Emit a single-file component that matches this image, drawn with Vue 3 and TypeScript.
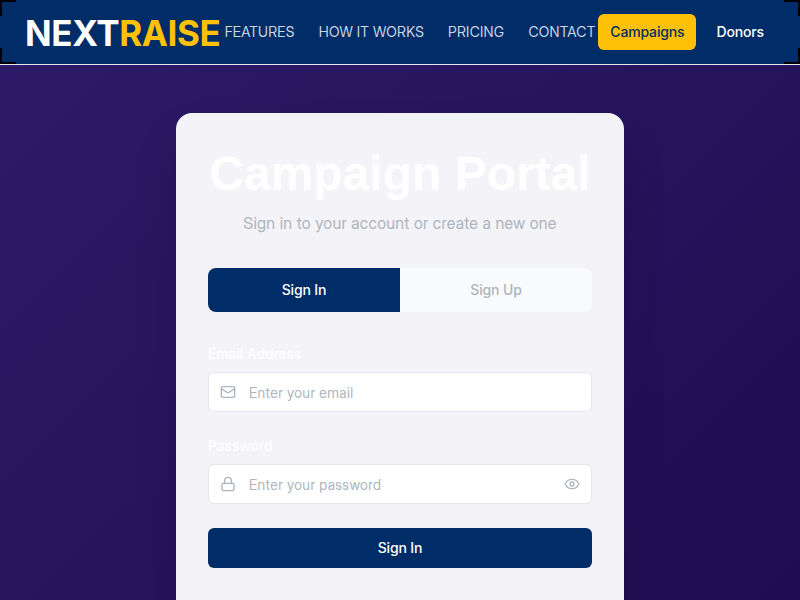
<script setup lang="ts">
import { ref } from 'vue'

const links: string[] = ['FEATURES', 'HOW IT WORKS', 'PRICING', 'CONTACT']
const mode = ref<'in' | 'up'>('in')
const email = ref('')
const password = ref('')
const shown = ref(false)
</script>

<template>
  <div class="page">
    <header class="header">
      <i class="corner tl"></i><i class="corner tr"></i><i class="corner bl"></i><i class="corner br"></i>
      <div class="logo">NEXT<span>RAISE</span></div>
      <nav class="nav">
        <a v-for="link in links" :key="link">{{ link }}</a>
      </nav>
      <div class="switcher">
        <button class="pill active">Campaigns</button>
        <button class="pill">Donors</button>
      </div>
    </header>
    <main class="main">
      <section class="card">
        <h1>Campaign Portal</h1>
        <p class="subtitle">Sign in to your account or create a new one</p>
        <div class="tabs">
          <button :class="{ selected: mode === 'in' }" @click="mode = 'in'">Sign In</button>
          <button :class="{ selected: mode === 'up' }" @click="mode = 'up'">Sign Up</button>
        </div>
        <form class="form" @submit.prevent>
          <div class="field">
            <label for="email">Email Address</label>
            <div class="control">
              <svg viewBox="0 0 24 24"><rect x="2" y="4" width="20" height="16" rx="2" /><path d="m22 7-8.97 5.7a1.94 1.94 0 0 1-2.06 0L2 7" /></svg>
              <input id="email" v-model="email" type="email" placeholder="Enter your email" />
            </div>
          </div>
          <div class="field">
            <label for="password">Password</label>
            <div class="control">
              <svg viewBox="0 0 24 24"><rect x="3" y="11" width="18" height="11" rx="2" /><path d="M7 11V7a5 5 0 0 1 10 0v4" /></svg>
              <input id="password" v-model="password" :type="shown ? 'text' : 'password'" placeholder="Enter your password" />
              <svg viewBox="0 0 24 24" @click="shown = !shown"><path d="M2.06 12.35a1 1 0 0 1 0-.7 10.75 10.75 0 0 1 19.88 0 1 1 0 0 1 0 .7 10.75 10.75 0 0 1-19.88 0" /><circle cx="12" cy="12" r="3" /></svg>
            </div>
          </div>
          <button class="submit">Sign In</button>
        </form>
      </section>
    </main>
  </div>
</template>

<style>
body {
  overflow: hidden;
}
</style>

<style scoped>
* {
  box-sizing: border-box;
}
button,
input {
  font: inherit;
  letter-spacing: inherit;
  border: 0;
  margin: 0;
}
.page {
  height: 600px;
  overflow: hidden;
  font-family: Inter, "Liberation Sans", sans-serif;
  font-size: 14px;
  line-height: 20px;
  letter-spacing: -0.15px;
  background: linear-gradient(135deg, #2d1b69 0%, #1f0d52 100%);
}
.header {
  position: relative;
  display: flex;
  align-items: center;
  justify-content: space-between;
  height: 65px;
  padding: 0 24px;
  background: #002d68;
  border-bottom: 1px solid #e2e8f0;
}
.corner {
  position: absolute;
  width: 16px;
  height: 16px;
  border: 0 solid #000;
}
.tl { top: 0; left: 0; border-width: 2px 0 0 2px; }
.tr { top: 0; right: 0; border-width: 2px 2px 0 0; }
.bl { bottom: 0; left: 0; border-width: 0 0 2px 2px; }
.br { bottom: 0; right: 0; border-width: 0 2px 2px 0; }
.logo {
  width: 198px;
  padding: 2px 0 0 1px;
  font-size: 35px;
  line-height: 40px;
  font-weight: 700;
  letter-spacing: -0.4px;
  white-space: nowrap;
  color: #fff;
}
.logo span {
  color: #ffc107;
}
.nav {
  display: flex;
  gap: 24px;
  font-family: "Inter Display", Inter, sans-serif;
  letter-spacing: 0.3px;
  color: #ccd5e1;
  white-space: nowrap;
}
.switcher {
  display: flex;
  gap: 8px;
}
.pill {
  height: 36px;
  padding: 0 12px;
  border-radius: 6px;
  background: transparent;
  color: #fff;
  font-weight: 500;
}
.pill.active {
  background: #ffc107;
  color: #002d68;
}
.main {
  display: flex;
  justify-content: center;
  padding: 48px 16px;
}
.card {
  width: 448px;
  height: 620px;
  padding: 32px;
  border-radius: 16px;
  background: linear-gradient(135deg, #f4f3f8 0%, #f3f3f8 70%, #f4f4f6 90%);
  box-shadow: 0 25px 50px -12px rgba(0, 0, 0, 0.25);
}
h1 {
  margin: 0 0 8px;
  font-family: "Liberation Sans", sans-serif;
  font-size: 48px;
  line-height: 58px;
  font-weight: 700;
  letter-spacing: 0;
  text-align: center;
  white-space: nowrap;
  color: #fff;
}
.subtitle {
  margin: 0 0 32px;
  font-family: "Inter Display", Inter, sans-serif;
  font-size: 16px;
  line-height: 25px;
  letter-spacing: 0.3px;
  text-align: center;
  color: #adb5bd;
}
.tabs {
  display: flex;
  height: 44px;
  margin-bottom: 32px;
  border-radius: 8px;
  overflow: hidden;
}
.tabs button {
  flex: 1;
  background: #f8fafc;
  color: #adb5bd;
  font-weight: 500;
}
.tabs button.selected {
  background: #002d68;
  color: #fff;
}
.form {
  display: flex;
  flex-direction: column;
  gap: 24px;
}
.field {
  display: flex;
  flex-direction: column;
  gap: 8px;
}
label {
  font-weight: 500;
  color: #fff;
}
.control {
  display: flex;
  align-items: center;
  gap: 13px;
  height: 40px;
  padding: 0 11px;
  border: 1px solid #e0e4ec;
  border-radius: 6px;
  background: #fff;
}
.control svg {
  width: 16px;
  height: 16px;
  flex: none;
  fill: none;
  stroke: #adb5bd;
  stroke-width: 2;
  stroke-linecap: round;
  stroke-linejoin: round;
}
.control input {
  flex: 1;
  min-width: 0;
  padding: 2px 0 0;
  font-family: "Inter Display", Inter, sans-serif;
  letter-spacing: 0.41px;
  background: transparent;
  outline: 0;
}
.control input::placeholder {
  color: #adb5bd;
}
.submit {
  height: 40px;
  border-radius: 6px;
  background: #002d68;
  color: #fff;
  font-weight: 500;
}
</style>
